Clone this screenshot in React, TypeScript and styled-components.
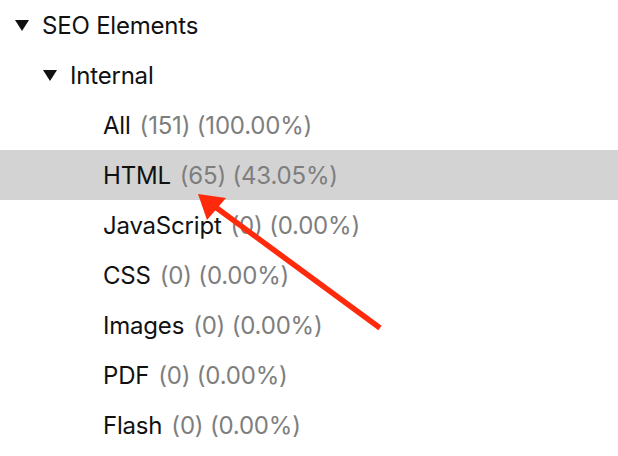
import React from "react";
import styled, { createGlobalStyle } from "styled-components";

const Global = createGlobalStyle`
  html, body { margin: 0; padding: 0; background: #ffffff; }
  body { font-family: Inter, "Noto Sans", sans-serif; }
`;

const Page = styled.div`
  position: relative;
  width: 618px;
  height: 456px;
  overflow: hidden;
  background: #ffffff;
`;

const Tree = styled.ul`
  list-style: none;
  margin: 0;
  padding: 0;
  display: flex;
  flex-direction: column;
`;

const Row = styled.li<{ $indent: number; $selected?: boolean }>`
  display: flex;
  align-items: center;
  height: 50px;
  padding-left: ${(p) => p.$indent}px;
  background: ${(p) => (p.$selected ? "#d3d3d3" : "transparent")};
  font-size: 24px;
  letter-spacing: -0.2px;
  color: #111111;
  white-space: nowrap;
`;

const Disclosure = styled.span`
  display: inline-block;
  width: 0;
  height: 0;
  border-left: 7.5px solid transparent;
  border-right: 7.5px solid transparent;
  border-top: 11px solid #111111;
  margin-right: 13px;
  margin-top: 1px;
`;

const Label = styled.span``;

const Count = styled.span`
  color: #7e7e7e;
  margin-left: 9px;
`;

const Overlay = styled.svg`
  position: absolute;
  left: 0;
  top: 0;
  pointer-events: none;
`;

const items = [
  { label: "All", count: "(151) (100.00%)" },
  { label: "HTML", count: "(65) (43.05%)", selected: true },
  { label: "JavaScript", count: "(0) (0.00%)" },
  { label: "CSS", count: "(0) (0.00%)" },
  { label: "Images", count: "(0) (0.00%)" },
  { label: "PDF", count: "(0) (0.00%)" },
  { label: "Flash", count: "(0) (0.00%)" },
];

export default function App() {
  return (
    <Page>
      <Global />
      <Tree>
        <Row $indent={15}>
          <Disclosure />
          <Label>SEO Elements</Label>
        </Row>
        <Row $indent={43}>
          <Disclosure />
          <Label>Internal</Label>
        </Row>
        {items.map((it) => (
          <Row key={it.label} $indent={103} $selected={it.selected}>
            <Label>{it.label}</Label>
            <Count>{it.count}</Count>
          </Row>
        ))}
      </Tree>
      <Overlay width="618" height="456" viewBox="0 0 618 456">
        <line x1="380" y1="328" x2="214" y2="206" stroke="#ff2a0c" strokeWidth="5.5" />
        <polygon points="198,194 226,198 207,220" fill="#ff2a0c" />
      </Overlay>
    </Page>
  );
}
